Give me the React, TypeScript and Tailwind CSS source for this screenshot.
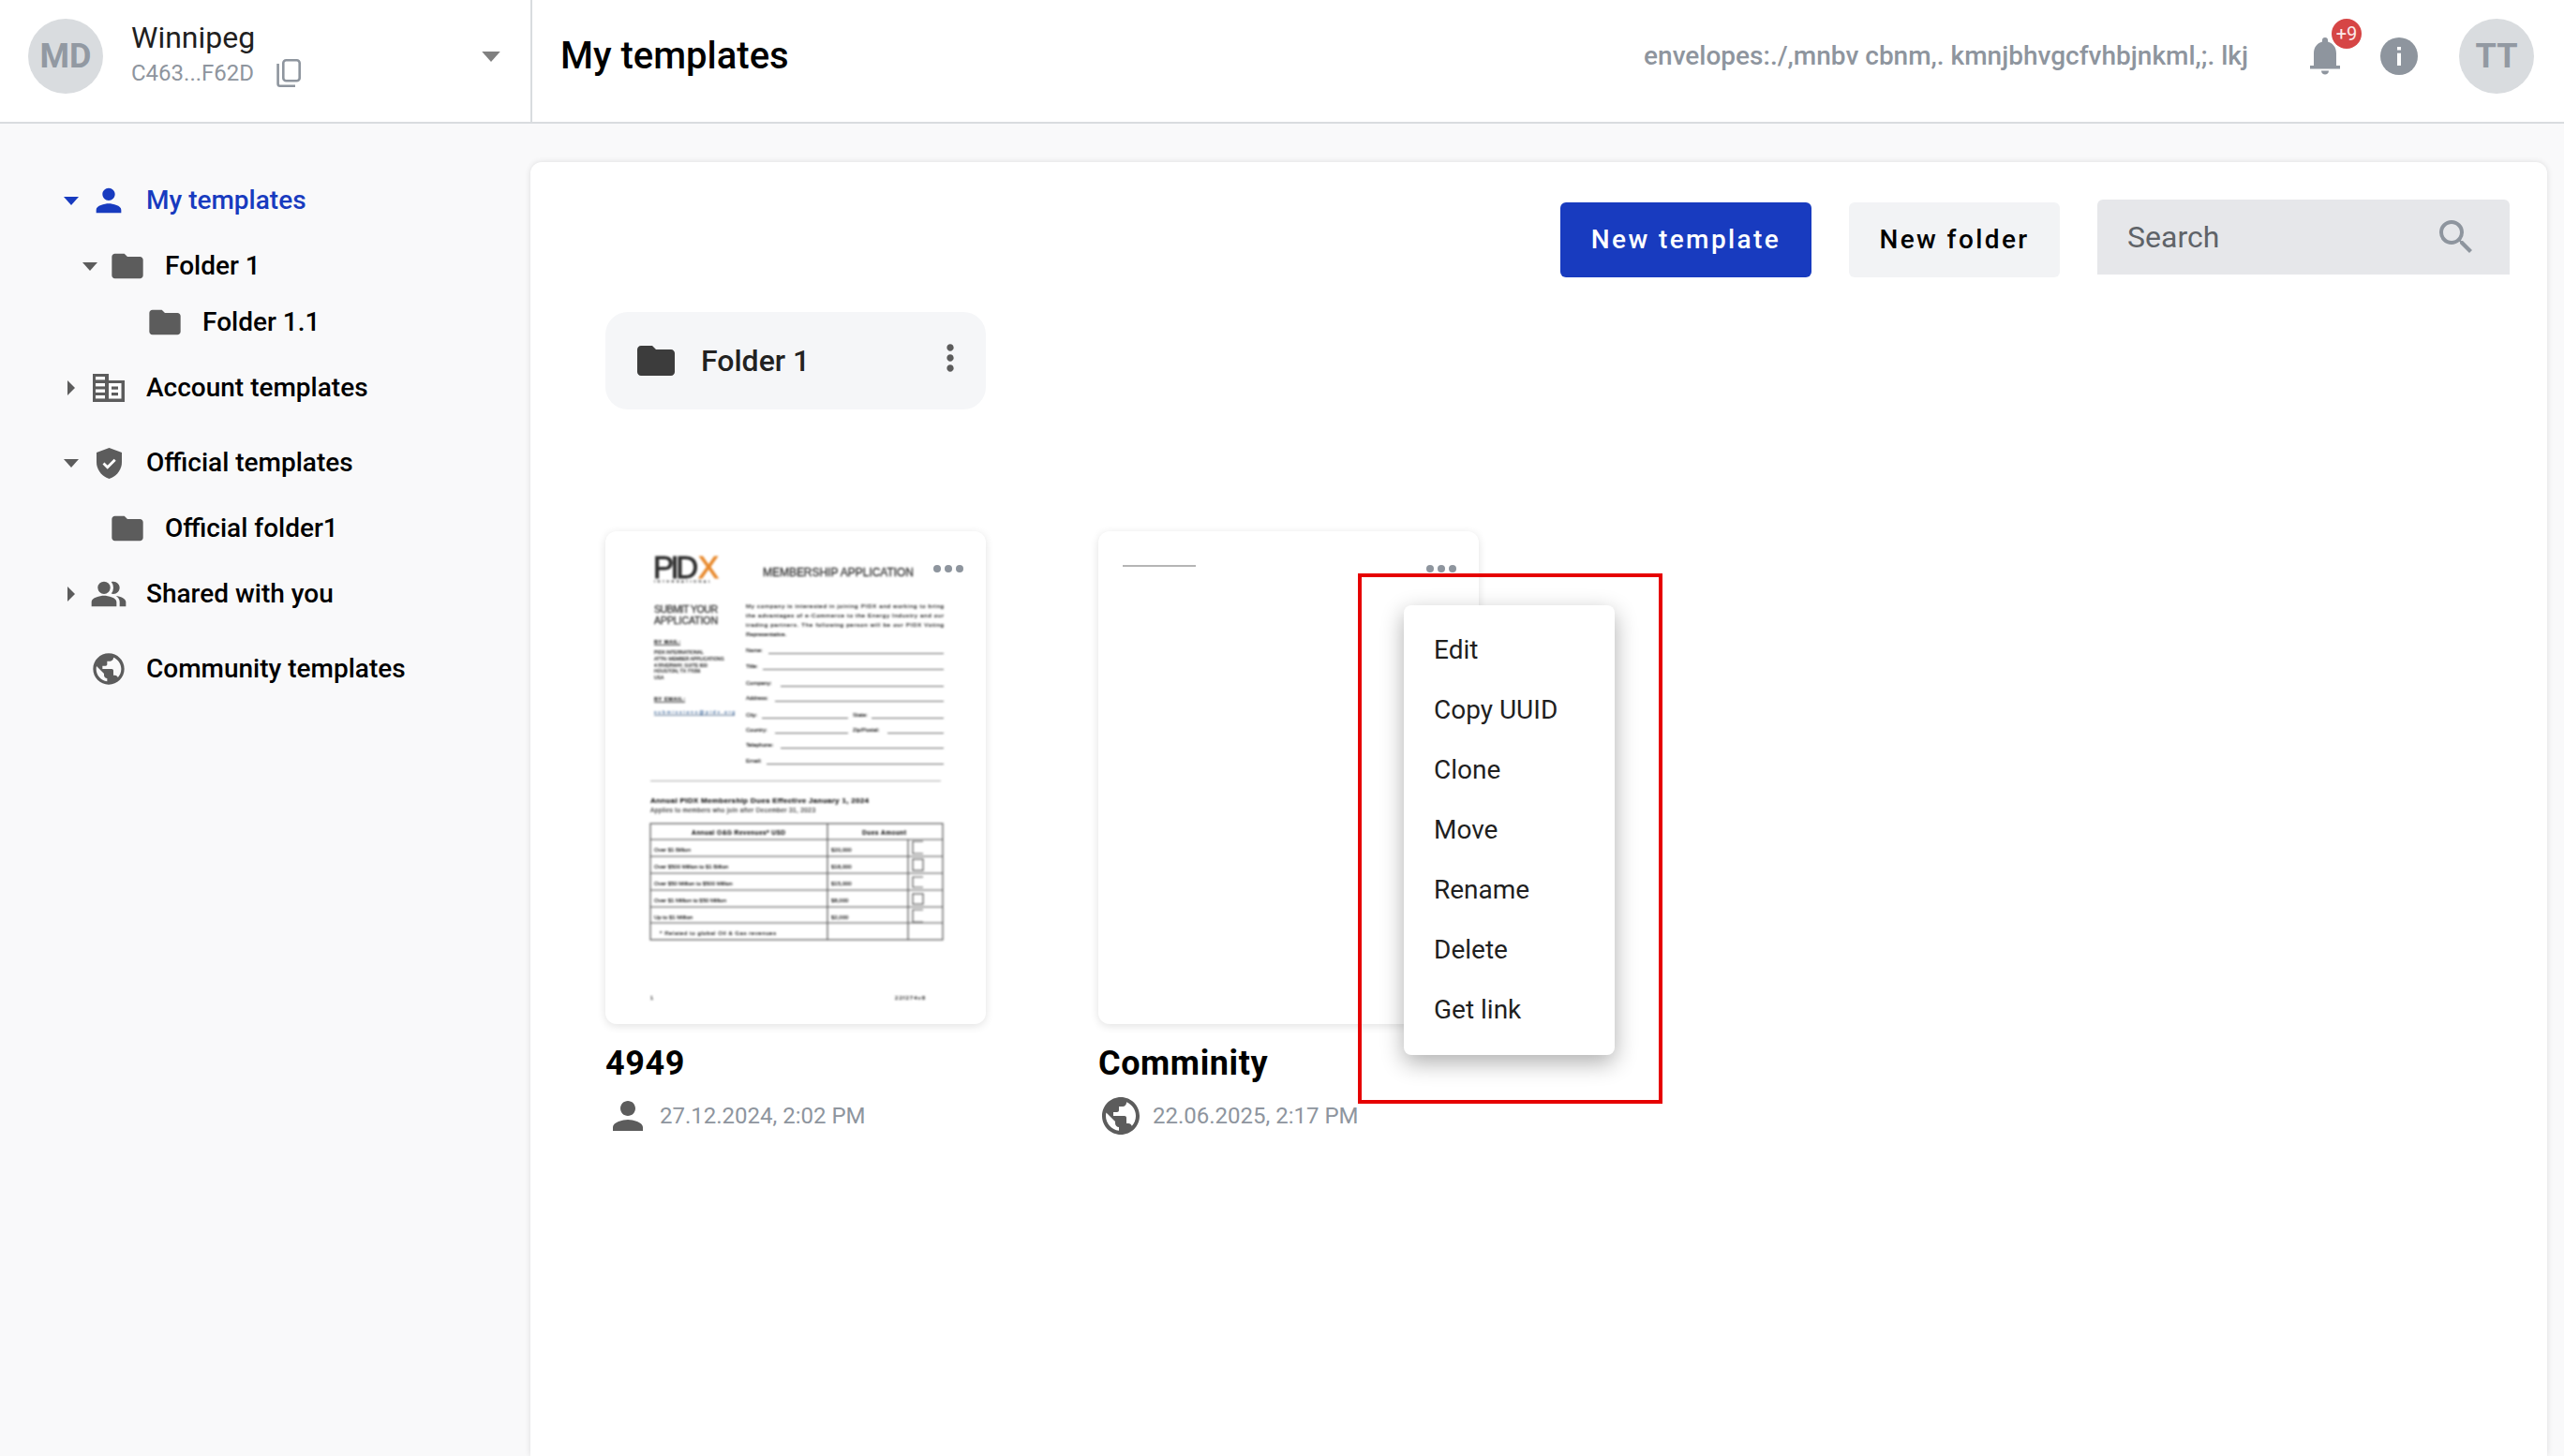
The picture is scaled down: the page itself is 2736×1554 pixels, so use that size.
import { ReactNode } from "react";
import {
  MdFolder,
  MdMoreVert,
  MdPeopleAlt,
  MdPerson,
  MdPublic,
  MdSearch,
} from "react-icons/md";

function CaretDown({ className }: { className: string }) {
  return (
    <svg viewBox="0 0 16 9" className={className} fill="currentColor">
      <polygon points="0,0 16,0 8,9" />
    </svg>
  );
}

function CaretRight() {
  return (
    <svg viewBox="0 0 8 16" className="w-[8px] h-[16px] text-[#5c5c5c]" fill="currentColor">
      <polygon points="0,0 8,8 0,16" />
    </svg>
  );
}

function Building() {
  return (
    <svg viewBox="0 0 34 30" className="w-[34px] h-[30px]">
      <rect x="0" y="0" width="17" height="30" fill="#5c5c5c" />
      <rect x="3" y="3" width="10" height="3.4" fill="#fff" />
      <rect x="3" y="10" width="10" height="3.4" fill="#fff" />
      <rect x="3" y="16.5" width="10" height="3.4" fill="#fff" />
      <rect x="3" y="23" width="10" height="3.4" fill="#fff" />
      <path d="M17 7h17v23H17z" fill="#5c5c5c" />
      <rect x="17" y="10" width="13.5" height="16.5" fill="#fff" />
      <rect x="20" y="13.5" width="7" height="3.2" fill="#5c5c5c" />
      <rect x="20" y="20" width="7" height="3.2" fill="#5c5c5c" />
    </svg>
  );
}

function Shield() {
  return (
    <svg viewBox="0 0 27 33" className="w-[27px] h-[33px]">
      <path d="M13.5 0 27 5v10c0 9-6 15.500-13.500 18C6 30.500 0 24 0 15V5Z" fill="#5c5c5c" />
      <path d="m7.500 16.500 4.200 4.200 8-8" fill="none" stroke="#fff" strokeWidth="2.800" />
    </svg>
  );
}

function CopyIcon() {
  return (
    <svg viewBox="0 0 26 30" className="w-[26px] h-[30px] text-[#8e959e]" fill="none" stroke="currentColor" strokeWidth="2.6">
      <rect x="7.3" y="1.3" width="17.4" height="22" rx="3" />
      <path d="M1.6 5v21.5a2.2 2.2 0 0 0 2.2 2.2H20" />
    </svg>
  );
}

function Bell() {
  return (
    <svg viewBox="0 0 32 40" className="w-[32px] h-[40px] text-[#8e959e]" fill="currentColor">
      <path d="M4 30V17C4 10 8 6 13 4.5V3a3 3 0 0 1 6 0v1.500C24 6 28 10 28 17v13h4v3.500H0V30Z" />
      <path d="M12 35.500h8c0 2.500-2 4-4 4s-4-1.500-4-4z" />
    </svg>
  );
}

function InfoIcon() {
  return (
    <svg viewBox="0 0 40 40" className="w-[40px] h-[40px]">
      <circle cx="20" cy="20" r="20" fill="#8e959e" />
      <rect x="18" y="10" width="4" height="3.500" fill="#fff" />
      <rect x="18" y="16.700" width="4" height="13.300" fill="#fff" />
    </svg>
  );
}

function Avatar({ label }: { label: string }) {
  return (
    <div className="w-[80px] h-[80px] shrink-0 rounded-full bg-[#d9dcdf] flex items-center justify-center text-[36px] font-bold text-[#9299a2]">
      {label}
    </div>
  );
}

function TreeRow({
  pad,
  caret,
  icon,
  text,
  active,
  margin,
}: {
  pad: string;
  caret?: "down" | "right";
  icon: ReactNode;
  text: string;
  active?: boolean;
  margin: string;
}) {
  return (
    <div className={`flex items-center h-[60px] ${pad} ${margin}`}>
      <div className="w-[24px] flex justify-center">
        {caret === "down" && (
          <CaretDown className={`w-[16px] h-[9px] ${active ? "text-[#183bbf]" : "text-[#5c5c5c]"}`} />
        )}
        {caret === "right" && <CaretRight />}
      </div>
      <div className={`w-[40px] ml-[8px] flex justify-center ${active ? "text-[#183bbf]" : "text-[#5c5c5c]"}`}>
        {icon}
      </div>
      <span className={`ml-[20px] text-[28px] font-medium ${active ? "text-[#183bbf]" : "text-black"}`}>{text}</span>
    </div>
  );
}

function Sidebar() {
  return (
    <aside className="w-[566px] shrink-0 pt-[52px]">
      <TreeRow pad="pl-[64px]" margin="mt-0" caret="down" active icon={<MdPerson size={40} />} text="My templates" />
      <TreeRow pad="pl-[84px]" margin="mt-[10px]" caret="down" icon={<MdFolder size={40} />} text="Folder 1" />
      <TreeRow pad="pl-[124px]" margin="mt-0" icon={<MdFolder size={40} />} text="Folder 1.1" />
      <TreeRow pad="pl-[64px]" margin="mt-[10px]" caret="right" icon={<Building />} text="Account templates" />
      <TreeRow pad="pl-[64px]" margin="mt-[20px]" caret="down" icon={<Shield />} text="Official templates" />
      <TreeRow pad="pl-[84px]" margin="mt-[10px]" icon={<MdFolder size={40} />} text="Official folder1" />
      <TreeRow pad="pl-[64px]" margin="mt-[10px]" caret="right" icon={<MdPeopleAlt size={40} />} text="Shared with you" />
      <TreeRow pad="pl-[64px]" margin="mt-[20px]" icon={<MdPublic size={40} />} text="Community templates" />
    </aside>
  );
}

function Header() {
  return (
    <header className="h-[132px] shrink-0 flex bg-white border-b-2 border-[#d9dcdf]">
      <div className="w-[568px] shrink-0 flex items-center pl-[30px] pr-[32px] pb-[10px] border-r-2 border-[#d9dcdf]">
        <Avatar label="MD" />
        <div className="ml-[30px] flex-1 pb-[6px]">
          <div className="text-[32px] leading-[40px] text-[#1f1f1f]">Winnipeg</div>
          <div className="flex items-center mt-[2px]">
            <span className="text-[24px] leading-[32px] text-[#8e959e]">C463...F62D</span>
            <span className="ml-[24px]">
              <CopyIcon />
            </span>
          </div>
        </div>
        <CaretDown className="w-[20px] h-[11px] text-[#808080]" />
      </div>
      <div className="flex-1 flex items-center pl-[30px] pr-[32px] pb-[10px]">
        <h1 className="text-[40px] font-medium text-black">My templates</h1>
        <span className="ml-auto text-[28px] font-medium text-[#8e959e]">
          envelopes:./,mnbv cbnm,. kmnjbhvgcfvhbjnkml,;. lkj
        </span>
        <div className="relative ml-[66px]">
          <Bell />
          <span className="absolute left-[23px] top-[-20px] w-[32px] h-[32px] rounded-full bg-[#d64545] text-[#fbeaea] text-[20px] flex items-center justify-center">
            +9
          </span>
        </div>
        <div className="ml-[43px] flex">
          <InfoIcon />
        </div>
        <div className="ml-[44px]">
          <Avatar label="TT" />
        </div>
      </div>
    </header>
  );
}

const formRows = [
  { label: "Name:", y: 130, from: 174, to: 361 },
  { label: "Title:", y: 147, from: 168, to: 361 },
  { label: "Company:", y: 165, from: 187, to: 361 },
  { label: "Address:", y: 181, from: 181, to: 361 },
  { label: "City:", y: 199, from: 167, to: 259 },
  { label: "Country:", y: 215, from: 181, to: 259 },
  { label: "Telephone:", y: 231, from: 187, to: 361 },
  { label: "Email:", y: 248, from: 172, to: 361 },
];

const tableRows = [
  { name: "Over $1 Billion", dues: "$20,000", y: 342 },
  { name: "Over $500 Million to $1 Billion", dues: "$18,000", y: 360 },
  { name: "Over $50 Million to $500 Million", dues: "$15,000", y: 378 },
  { name: "Over $1 Million to $50 Million", dues: "$8,000", y: 396 },
  { name: "Up to $1 Million", dues: "$2,000", y: 414 },
];

function PidxDoc() {
  return (
    <svg viewBox="0 0 406 526" className="absolute inset-0 w-[406px] h-[526px] blur-[0.8px]" fontFamily="Liberation Sans, sans-serif" fill="#111" stroke="#111" strokeWidth="0.15">
      <text x="51" y="50" fontSize="33" fill="#2f2f2f" stroke="#2f2f2f" strokeWidth="0.9" textLength="48">PID</text>
      <text x="99" y="50" fontSize="33" fill="#e8892c" stroke="#e8892c" strokeWidth="0.9">X</text>
      <text x="52" y="55" fontSize="4" fill="#666" textLength="60">INTERNATIONAL</text>
      <text x="168" y="48" fontSize="12" fill="#333" stroke="#333" strokeWidth="0.3" textLength="161">MEMBERSHIP APPLICATION</text>

      <text x="52" y="87" fontSize="10.500" fill="#333" stroke="#333" strokeWidth="0.3" textLength="68">SUBMIT YOUR</text>
      <text x="52" y="99" fontSize="10.500" fill="#333" stroke="#333" strokeWidth="0.3" textLength="68">APPLICATION</text>
      <text x="52" y="120" fontSize="5.500" fontWeight="700" textLength="28">BY MAIL:</text>
      <rect x="52" y="121" width="28" height="0.700" />
      {["PIDX INTERNATIONAL", "ATTN: MEMBER APPLICATIONS", "4 RIVERWAY, SUITE 600", "HOUSTON, TX 77056", "USA"].map((line, i) => (
        <text key={line} x="52" y={131 + i * 6.8} fontSize="5">
          {line}
        </text>
      ))}
      <text x="52" y="181" fontSize="5.500" fontWeight="700" textLength="33">BY EMAIL:</text>
      <rect x="52" y="182" width="33" height="0.700" />
      <text x="52" y="195" fontSize="5" fill="#3f6a9e" stroke="#3f6a9e" textLength="86">submissions@pidx.org</text>
      <rect x="52" y="196" width="86" height="0.600" fill="#3f6a9e" />

      {[
        "My company is interested in joining PIDX and working to bring",
        "the advantages of e-Commerce to the Energy Industry and our",
        "trading partners. The following person will be our PIDX Voting",
      ].map((line, i) => (
        <text key={line} x="150" y={82 + i * 9.8} fontSize="6.200" textLength="211">
          {line}
        </text>
      ))}
      <text x="150" y="112" fontSize="6.200">Representative.</text>

      {formRows.map((r) => (
        <g key={r.label}>
          <text x="150" y={r.y - 1} fontSize="6">{r.label}</text>
          <rect x={r.from} y={r.y} width={r.to - r.from} height="0.900" fill="#555" stroke="none" />
        </g>
      ))}
      <text x="264" y="198" fontSize="6">State:</text>
      <rect x="284" y="199" width="77" height="0.900" fill="#555" stroke="none" />
      <text x="264" y="214" fontSize="6">Zip/Postal:</text>
      <rect x="301" y="215" width="60" height="0.900" fill="#555" stroke="none" />

      <rect x="48" y="266" width="310" height="1" fill="#aaa" stroke="none" />
      <text x="48" y="290" fontSize="8" fontWeight="700" textLength="233">Annual PIDX Membership Dues Effective January 1, 2024</text>
      <text x="48" y="300" fontSize="6.500" fill="#444" textLength="176">Applies to members who join after December 31, 2023</text>

      <g fill="none" stroke="#555" strokeWidth="1.2">
        <rect x="48" y="312" width="312" height="124" />
        <path d="M48 329H360M48 347H360M48 365H360M48 383H360M48 401H360M48 418H360" />
        <path d="M237 312V436M323 329V436" />
        <path d="M339 331H328V344H339" />
        <rect x="328" y="350" width="11" height="12" />
        <path d="M339 369H328V380H339" />
        <rect x="328" y="387" width="11" height="11" />
        <path d="M339 404H328V417H339" />
      </g>
      <text x="92" y="324" fontSize="6.500" fontWeight="700" textLength="100">Annual O&amp;G Revenues* USD</text>
      <text x="274" y="324" fontSize="6.500" fontWeight="700" textLength="47">Dues Amount</text>
      {tableRows.map((r) => (
        <g key={r.name}>
          <text x="52" y={r.y} fontSize="6">{r.name}</text>
          <text x="241" y={r.y} fontSize="6">{r.dues}</text>
        </g>
      ))}
      <text x="58" y="431" fontSize="6" textLength="124">* Related to global Oil &amp; Gas revenues</text>
      <text x="48" y="500" fontSize="5.500">1</text>
      <text x="309" y="500" fontSize="6" textLength="32">22f274v8</text>
    </svg>
  );
}

function Dots() {
  return (
    <div className="absolute top-[36px] right-[24px] flex gap-[4px]">
      <span className="w-[8px] h-[8px] rounded-full bg-[#8e959e]" />
      <span className="w-[8px] h-[8px] rounded-full bg-[#8e959e]" />
      <span className="w-[8px] h-[8px] rounded-full bg-[#8e959e]" />
    </div>
  );
}

function TemplateCard({
  title,
  date,
  icon,
  children,
}: {
  title: string;
  date: string;
  icon: ReactNode;
  children?: ReactNode;
}) {
  return (
    <div className="w-[406px]">
      <div className="relative w-[406px] h-[526px] rounded-[12px] bg-white shadow-[0_2px_10px_rgba(0,0,0,0.12)] overflow-hidden">
        {children}
        <Dots />
      </div>
      <div className="mt-[16px] text-[36px] leading-[52px] font-bold tracking-[0.6px] text-black">{title}</div>
      <div className="mt-[6px] flex items-center h-[48px] text-[24px] text-[#8e959e]">
        {icon}
        <span className="ml-[10px] whitespace-nowrap">{date}</span>
      </div>
    </div>
  );
}

function ContextMenu() {
  const items = ["Edit", "Copy UUID", "Clone", "Move", "Rename", "Delete", "Get link"];
  return (
    <div className="absolute left-[932px] top-[473px] w-[225px] h-[480px] py-[16px] rounded-[8px] bg-white shadow-[0_8px_24px_rgba(0,0,0,0.32)]">
      {items.map((item) => (
        <div key={item} className="h-[64px] pl-[32px] flex items-center text-[28px] text-[#1f1f1f]">
          {item}
        </div>
      ))}
    </div>
  );
}

export default function App() {
  return (
    <div className="w-[2736px] h-[1554px] flex flex-col overflow-hidden bg-[#f9f9fa] font-['Roboto',sans-serif]">
      <Header />
      <div className="flex-1 flex min-h-0">
        <Sidebar />
        <main className="relative w-[2152px] mt-[41px] pt-[40px] pl-[80px] pr-[40px] bg-white rounded-t-[12px] shadow-[0_0_6px_rgba(0,0,0,0.12)]">
          <div className="flex justify-end items-start">
            <button className="mt-[3px] w-[268px] h-[80px] rounded-[6px] bg-[#183bbf] text-white text-[28px] font-medium tracking-[2.4px]">
              New template
            </button>
            <button className="mt-[3px] ml-[40px] w-[225px] h-[80px] rounded-[6px] bg-[#f2f3f5] text-black text-[28px] font-medium tracking-[2.4px]">
              New folder
            </button>
            <div className="ml-[40px] w-[440px] h-[80px] rounded-t-[6px] bg-[#e6e7ea] flex items-center pl-[32px] pr-[33px] text-[32px] text-[#5f6368]">
              <span>Search</span>
              <MdSearch size={48} className="ml-auto text-[#8e959e]" />
            </div>
          </div>

          <div className="mt-[37px] w-[406px] h-[104px] rounded-[24px] bg-[#f5f6f8] flex items-center pl-[30px] pr-[16px]">
            <MdFolder size={48} className="text-[#3c3c3c]" />
            <span className="ml-[24px] text-[32px] font-medium text-[#222]">Folder 1</span>
            <MdMoreVert size={44} className="ml-auto mb-[6px] text-[#5c5c5c]" />
          </div>

          <div className="mt-[130px] flex gap-[120px]">
            <TemplateCard
              title="4949"
              date="27.12.2024, 2:02 PM"
              icon={<MdPerson size={48} className="text-[#5c5c5c]" />}
            >
              <PidxDoc />
            </TemplateCard>
            <TemplateCard
              title="Comminity"
              date="22.06.2025, 2:17 PM"
              icon={<MdPublic size={48} className="text-[#5c5c5c]" />}
            >
              <div className="absolute left-[26px] top-[36px] w-[78px] h-[2px] bg-[#b5b5b5] blur-[0.5px]" />
            </TemplateCard>
          </div>

          <ContextMenu />
          <div className="absolute left-[883px] top-[439px] w-[325px] h-[566px] border-4 border-[#e60000] pointer-events-none" />
        </main>
      </div>
    </div>
  );
}
